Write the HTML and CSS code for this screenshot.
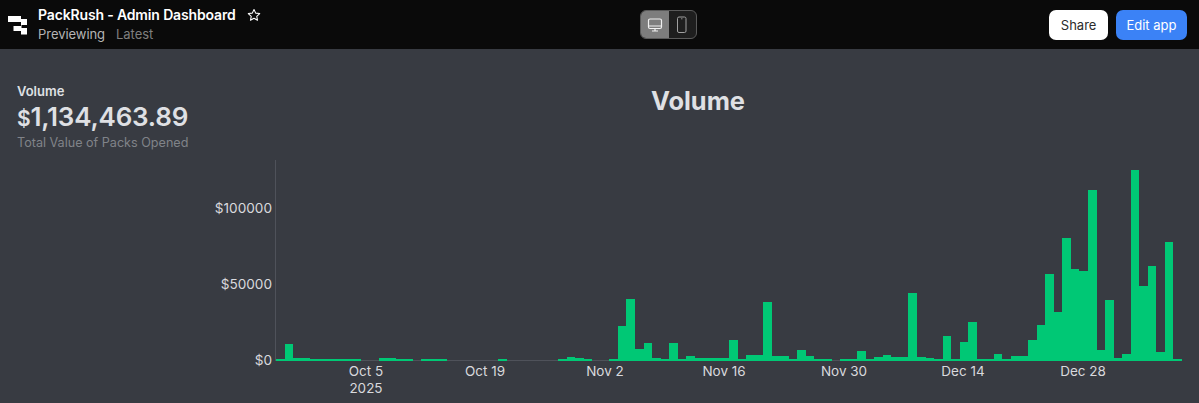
FILE: index.html
```html
<!DOCTYPE html>
<html lang="en">
<head>
  <meta charset="UTF-8">
  <meta name="viewport" content="width=device-width, initial-scale=1.0">
  <title>PackRush - Admin Dashboard</title>
  <link rel="stylesheet" href="styles.css">
</head>
<body>
  <header class="topbar">
    <div class="brand">
      <svg class="logo" width="20" height="20" viewBox="0 0 20 20">
        <path d="M0 1h13v3h6v6h-5.500v3H19V19.500H13V16H5.500v-5H13V7H0z" fill="#fff" fill-rule="evenodd"/>
      </svg>
      <div class="brand-text">
        <div class="brand-title">
          <span class="app-name">PackRush - Admin Dashboard</span>
          <svg class="star" width="14" height="14" viewBox="0 0 24 24" fill="none" stroke="#fff" stroke-width="1.800" stroke-linejoin="round">
            <path d="M12 2.500l2.900 6.300 6.900.8-5.100 4.700 1.400 6.800-6.100-3.400-6.100 3.400 1.400-6.800-5.100-4.700 6.900-.8z"/>
          </svg>
        </div>
        <div class="brand-sub"><span>Previewing</span><span class="muted">Latest</span></div>
      </div>
    </div>
    <div class="device-toggle">
      <span class="device device-active">
        <svg width="16" height="16" viewBox="0 0 16 16" fill="none" stroke="#f0f0f0" stroke-width="1.200">
          <rect x="1.500" y="2" width="13" height="9.500" rx="1.500"/>
          <path d="M1.500 9h13M8 11.500v2.500M5 14h6"/>
        </svg>
      </span>
      <span class="device">
        <svg width="16" height="18" viewBox="0 0 16 18" fill="none" stroke="#a0a0a0" stroke-width="1">
          <rect x="3.500" y="1" width="8.500" height="15.500" rx="1.500"/>
          <path d="M7.200 2.800h1.200"/>
        </svg>
      </span>
    </div>
    <div class="actions">
      <button class="btn btn-white">Share</button>
      <button class="btn btn-blue">Edit app</button>
    </div>
  </header>

  <main class="content">
    <section class="stat">
      <div class="stat-label">Volume</div>
      <div class="stat-value"><span class="currency">$</span>1,134,463.89</div>
      <div class="stat-note">Total Value of Packs Opened</div>
    </section>
    <section class="chart">
      <h2 class="chart-title">Volume</h2>
      <div class="plot" id="plot">
        <div class="bars" id="bars"></div>
      </div>
    </section>
  </main>

  <script src="chart.js"></script>
</body>
</html>
```

FILE: styles.css
```css
*{
  box-sizing: border-box;
}

body{
  margin: 0;
  height: 403px;
  overflow: hidden;
  background: #383b42;
  font-family: "Inter", "Liberation Sans", sans-serif;
  color: #e4e5e9;
}

.topbar{
  display: grid;
  grid-template-columns: 632px auto 1fr;
  align-items: center;
  height: 49px;
  padding: 0 12px 0 8px;
  background: #0a0a0a;
}

.brand{
  display: flex;
  align-items: center;
  gap: 10px;
}
.brand-title{
  display: flex;
  align-items: center;
  gap: 11px;
  font-size: 14px;
  line-height: 18px;
  font-weight: 600;
  letter-spacing: -0.15px;
  color: #fff;
}
.brand-sub{
  display: flex;
  gap: 11px;
  margin-top: 1px;
  font-size: 13px;
  line-height: 18px;
  letter-spacing: -0.05px;
  color: #b5b5b5;
}
.brand-sub .muted{
  color: #7f7f7f;
}

.device-toggle{
  display: flex;
  width: 57px;
  height: 29px;
  border: 1px solid #5a5a5a;
  border-radius: 6px;
  background: #1e1e1e;
  overflow: hidden;
}
.device{
  display: flex;
  align-items: center;
  justify-content: center;
  flex: 1;
}
.device-active{
  background: #7d7d7d;
}

.actions{
  display: flex;
  justify-content: flex-end;
  gap: 8px;
}
.btn{
  height: 30px;
  border: none;
  border-radius: 7px;
  font-family: inherit;
  font-size: 13px;
}
.btn-white{
  padding: 0 11.5px;
  background: #fff;
  color: #2b2b2b;
}
.btn-blue{
  padding: 0 10.5px;
  background: #3b82f6;
  color: #fff;
}

.content{
  display: flex;
  height: 354px;
}

.stat{
  flex: 0 0 197px;
  padding: 34px 0 0 17px;
}
.stat-label{
  font-size: 13px;
  line-height: 16px;
  font-weight: 600;
  color: #dfe0e4;
}
.stat-value{
  margin-top: 1px;
  font-size: 26px;
  line-height: 33px;
  font-weight: 600;
  letter-spacing: -0.2px;
  color: #dfe0e4;
  white-space: nowrap;
}
.currency{
  font-size: 21px;
}
.stat-note{
  font-size: 12.6px;
  line-height: 16px;
  color: #808389;
}

.chart{
  position: relative;
  flex: 1;
}
.chart-title{
  margin: 36px 0 0;
  font-size: 25.4px;
  line-height: 32px;
  font-weight: 700;
  text-align: center;
  color: #dfe0e4;
}

/* plot box: x 275-1181, baseline at y 360 */
.plot{
  position: absolute;
  left: 78px;
  top: 111px;
  width: 907px;
  height: 201px;
  border-left: 1px solid #4f525a;
  border-bottom: 1px solid #4f525a;
}
.bars{
  display: flex;
  align-items: flex-end;
  height: calc(100% + 1px);
}
.bar{
  flex: 1;
  background: #00c875;
}
.tick-y{
  position: absolute;
  right: 100%;
  margin-right: 4px;
  transform: translateY(-50%);
  font-size: 13.6px;
  line-height: 16px;
  color: #d8d9dd;
}
.tick-x{
  position: absolute;
  top: 100%;
  margin-top: 3px;
  transform: translateX(-50%);
  font-size: 13.5px;
  line-height: 17px;
  text-align: center;
  white-space: nowrap;
  color: #d8d9dd;
}
```

FILE: chart.js
```js
// bar heights in px, one per day, read off the axis (76px = $50000)
const heights = [
  1,16,2,2,1,1,1,1,1,1,0,0,2,2,1,1,0,1,1,1,
  0,0,0,0,0,0,1,0,0,0,0,0,0,1,3,2,1,0,0,1,
  34,61,11,17,2,1,17,1,4,2,2,2,2,20,1,5,5,58,4,4,
  1,10,4,1,1,0,1,1,9,1,3,5,3,3,67,3,2,1,24,1,
  18,38,1,1,6,1,4,4,20,35,86,48,122,91,89,170,10,60,2,6,
  190,74,94,8,118,1
]

const $bars = document.querySelector('#bars')
const $plot = document.querySelector('#plot')

heights.forEach(h => {
  const $bar = document.createElement('div')
  $bar.className = 'bar'
  // +1 so a bar also covers the axis line
  $bar.style.height = (h ? h + 1 : 0) + 'px'
  $bars.appendChild($bar)
})

const yTicks = [['$100000', 48], ['$50000', 124], ['$0', 200]]
yTicks.forEach(([text, top]) => {
  const $tick = document.createElement('div')
  $tick.className = 'tick-y'
  $tick.textContent = text
  $tick.style.top = top + 'px'
  $plot.appendChild($tick)
})

const xTicks = [['Oct 5<br>2025', 90], ['Oct 19', 209], ['Nov 2', 329], ['Nov 16', 448], ['Nov 30', 568], ['Dec 14', 687], ['Dec 28', 807]]
xTicks.forEach(([text, left]) => {
  const $tick = document.createElement('div')
  $tick.className = 'tick-x'
  $tick.innerHTML = text
  $tick.style.left = left + 'px'
  $plot.appendChild($tick)
})
```
